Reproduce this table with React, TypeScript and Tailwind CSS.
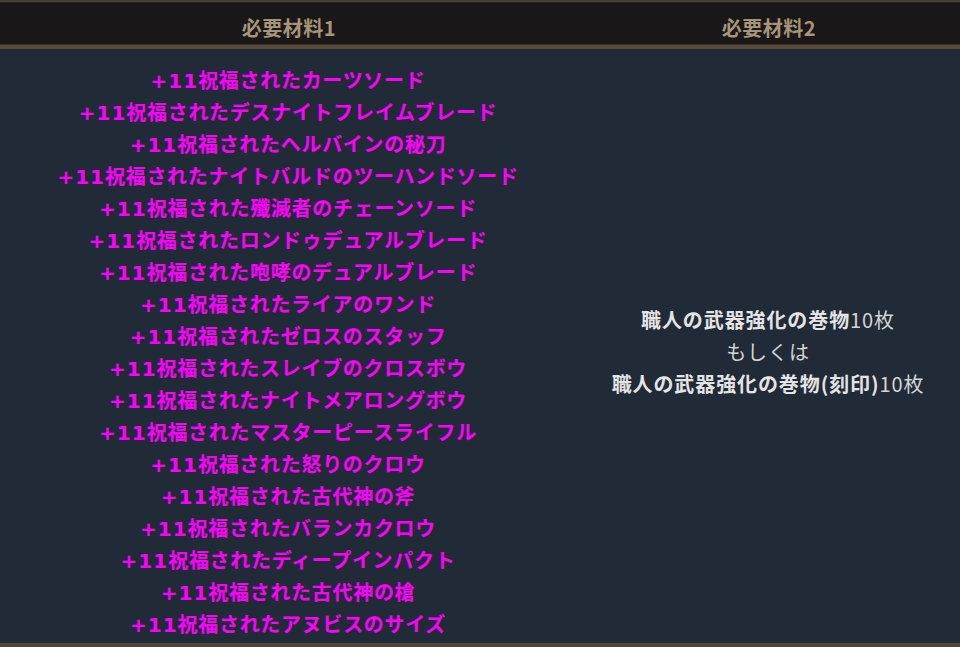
import React from "react";

const items = [
  "祝福されたカーツソード",
  "祝福されたデスナイトフレイムブレード",
  "祝福されたヘルバインの秘刀",
  "祝福されたナイトバルドのツーハンドソード",
  "祝福された殲滅者のチェーンソード",
  "祝福されたロンドゥデュアルブレード",
  "祝福された咆哮のデュアルブレード",
  "祝福されたライアのワンド",
  "祝福されたゼロスのスタッフ",
  "祝福されたスレイブのクロスボウ",
  "祝福されたナイトメアロングボウ",
  "祝福されたマスターピースライフル",
  "祝福された怒りのクロウ",
  "祝福された古代神の斧",
  "祝福されたバランカクロウ",
  "祝福されたディープインパクト",
  "祝福された古代神の槍",
  "祝福されたアヌビスのサイズ",
];

export default function App() {
  return (
    <div
      className="w-[960px] h-[647px] overflow-hidden bg-[#212b37] flex flex-col"
      style={{ fontFamily: '"Noto Sans CJK JP", "Noto Sans", sans-serif' }}
    >
      <div className="h-[3px] shrink-0 bg-[#47403a] border-b border-[#2a2622]" />
      <div className="h-[41px] shrink-0 bg-[#191717] grid grid-cols-[576px_384px] items-center text-[20px] font-bold text-[#a59677] tracking-[0.5px]">
        <div className="text-center pt-[8px] pl-[2px]">必要材料1</div>
        <div className="text-center pt-[8px] pl-[2px]">必要材料2</div>
      </div>
      <div className="h-[5px] shrink-0 bg-[#5a4a39] border-t border-[#3a3026]" />
      <div className="flex-1 min-h-0 grid grid-cols-[576px_384px]">
        <div className="flex flex-col items-center justify-center pt-[12px] text-[20px] font-bold text-[#ff00ff] tracking-[0.7px]">
          {items.map((t) => (
            <div key={t} className="h-[32px] leading-[32px] overflow-visible whitespace-nowrap">
              <span className="font-['DejaVu_Sans'] tracking-[1px] leading-[0]">+11</span>
              {t}
            </div>
          ))}
        </div>
        <div className="flex flex-col items-center justify-center text-[20px] leading-[32px] text-[#d4d4d4] tracking-[0.9px] pt-[12px]">
          <div>
            <span className="font-bold text-[#e4e4e4]">職人の武器強化の巻物</span>10枚
          </div>
          <div>もしくは</div>
          <div>
            <span className="font-bold text-[#e4e4e4]">職人の武器強化の巻物(刻印)</span>10枚
          </div>
        </div>
      </div>
      <div className="h-[4px] shrink-0 bg-[#4f4638]" />
    </div>
  );
}
